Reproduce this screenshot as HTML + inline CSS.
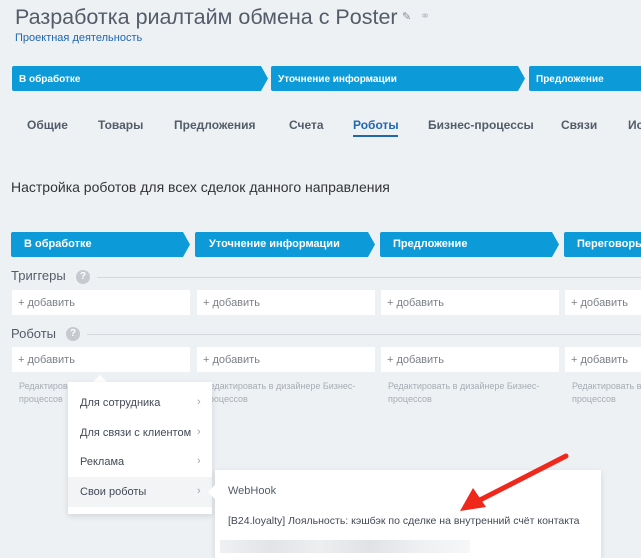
<!DOCTYPE html>
<html><head><meta charset="utf-8"><style>
*{margin:0;padding:0;box-sizing:border-box}
html,body{width:641px;height:558px;overflow:hidden}
body{background:#edf1f4;font-family:"Liberation Sans","Noto Sans CJK SC",sans-serif;position:relative;color:#535c69}
.a{position:absolute;white-space:nowrap}
.st{position:absolute;background:#0d9ad8;color:#fff;font-weight:bold;border-radius:2px;white-space:nowrap;overflow:hidden}
.chev{clip-path:polygon(0 0,calc(100% - 7px) 0,100% 50%,calc(100% - 7px) 100%,0 100%)}
.cell{position:absolute;background:#fff;height:25px;font-size:11px;color:#7b8088;padding:7px 0 0 6px;white-space:nowrap;overflow:hidden}
.tab{position:absolute;top:118px;font-size:12px;font-weight:bold;color:#535c69;white-space:nowrap}
.q{position:absolute;width:14px;height:14px;border-radius:50%;background:#c6cacf;color:#fff;font-size:10px;font-weight:bold;text-align:center;line-height:14px}
.ln{position:absolute;height:1px;background:#d5d9de}
.ed{position:absolute;font-size:9px;color:#a8adb4;line-height:13px;white-space:nowrap;overflow:hidden}
.mi{position:absolute;left:80px;font-size:11px;color:#424956;white-space:nowrap}
.ch{position:absolute;left:197px;font-size:11px;color:#a0a5ac}
</style></head><body>
<div class="a" style="left:15px;top:5px;font-size:21.5px;color:#535c69">Разработка риалтайм обмена с Poster</div>
<div class="a" style="left:402px;top:10px;font-size:11px;color:#8a9098">✎</div>
<div class="a" style="left:420px;top:9px;font-size:12px;color:#bcc1c7">⚭</div>
<div class="a" style="left:15px;top:32px;font-size:11px;color:#2067b0">Проектная деятельность</div>

<div class="st chev" style="left:12px;top:66px;width:256px;height:25px;font-size:10px;padding:8px 0 0 7px">В обработке</div>
<div class="st chev" style="left:271px;top:66px;width:254px;height:25px;font-size:10px;padding:8px 0 0 7px">Уточнение информации</div>
<div class="st" style="left:529px;top:66px;width:112px;height:25px;font-size:10px;padding:8px 0 0 7px;border-radius:2px 0 0 2px">Предложение</div>

<div class="tab" style="left:27px">Общие</div>
<div class="tab" style="left:98px">Товары</div>
<div class="tab" style="left:174px">Предложения</div>
<div class="tab" style="left:289px">Счета</div>
<div class="tab" style="left:353px;color:#2067b0">Роботы</div>
<div class="a" style="left:353px;top:135px;width:45px;height:2px;background:#2067b0"></div>
<div class="tab" style="left:428px">Бизнес-процессы</div>
<div class="tab" style="left:561px">Связи</div>
<div class="tab" style="left:628px;width:13px;overflow:hidden">Ис</div>

<div class="a" style="left:11px;top:179px;font-size:14px;color:#333">Настройка роботов для всех сделок данного направления</div>

<div class="st chev" style="left:11px;top:232px;width:179px;height:25px;font-size:11px;padding:6px 0 0 13px">В обработке</div>
<div class="st chev" style="left:195px;top:232px;width:180px;height:25px;font-size:11px;padding:6px 0 0 14px">Уточнение информации</div>
<div class="st chev" style="left:380px;top:232px;width:179px;height:25px;font-size:11px;padding:6px 0 0 13px">Предложение</div>
<div class="st" style="left:564px;top:232px;width:77px;height:25px;font-size:11px;padding:6px 0 0 13px;border-radius:2px 0 0 2px">Переговоры</div>

<div class="a" style="left:11px;top:268px;font-size:13px;color:#535c69">Триггеры</div>
<div class="q" style="left:76px;top:270px">?</div>
<div class="ln" style="left:97px;top:277px;width:544px"></div>
<div class="cell" style="left:12px;top:290px;width:178px">+ добавить</div>
<div class="cell" style="left:197px;top:290px;width:178px">+ добавить</div>
<div class="cell" style="left:381px;top:290px;width:178px">+ добавить</div>
<div class="cell" style="left:565px;top:290px;width:76px">+ добавить</div>

<div class="a" style="left:11px;top:326px;font-size:13px;color:#535c69">Роботы</div>
<div class="q" style="left:66px;top:327px">?</div>
<div class="ln" style="left:87px;top:334px;width:554px"></div>
<div class="cell" style="left:12px;top:347px;width:178px">+ добавить</div>
<div class="cell" style="left:197px;top:347px;width:178px">+ добавить</div>
<div class="cell" style="left:381px;top:347px;width:178px">+ добавить</div>
<div class="cell" style="left:565px;top:347px;width:76px">+ добавить</div>

<div class="ed" style="left:19px;top:380px;width:170px">Редактировать в дизайнере Бизнес-<br>процессов</div>
<div class="ed" style="left:204px;top:380px;width:170px">Редактировать в дизайнере Бизнес-<br>процессов</div>
<div class="ed" style="left:388px;top:380px;width:170px">Редактировать в дизайнере Бизнес-<br>процессов</div>
<div class="ed" style="left:572px;top:380px;width:69px">Редактировать в дизайнере Бизнес-<br>процессов</div>

<div class="a" style="left:93px;top:375px;width:0;height:0;border-left:7px solid transparent;border-right:7px solid transparent;border-bottom:7px solid #fff"></div>
<div class="a" style="left:68px;top:382px;width:144px;height:132px;background:#fff;box-shadow:0 2px 6px rgba(0,0,0,.12)"></div>
<div class="a" style="left:68px;top:477px;width:144px;height:30px;background:#f2f4f6"></div>
<div class="mi" style="top:397px">Для сотрудника</div><div class="ch" style="top:396px">›</div>
<div class="mi" style="top:427px">Для связи с клиентом</div><div class="ch" style="top:426px">›</div>
<div class="mi" style="top:456px">Реклама</div><div class="ch" style="top:455px">›</div>
<div class="mi" style="top:486px">Свои роботы</div><div class="ch" style="top:485px">›</div>

<div class="a" style="left:215px;top:470px;width:386px;height:88px;background:#fff;box-shadow:0 2px 6px rgba(0,0,0,.12)"></div>
<div class="a" style="left:208px;top:485px;width:0;height:0;border-top:7px solid transparent;border-bottom:7px solid transparent;border-right:7px solid #fff"></div>
<div class="a" style="left:228px;top:485px;font-size:11px;color:#535c69">WebHook</div>
<div class="a" style="left:228px;top:515px;font-size:10.5px;color:#424956">[B24.loyalty] Лояльность: кэшбэк по сделке на внутренний счёт контакта</div>
<div class="a" style="left:220px;top:540px;width:250px;height:13px;background:linear-gradient(90deg,#eef0f2,#e2e4e7,#eceef0,#e0e2e5,#eef0f2,#f6f7f8)"></div>

<svg class="a" style="left:0;top:0" width="641" height="558">
<line x1="566" y1="456" x2="478" y2="501" stroke="#f0271b" stroke-width="5" stroke-linecap="round"/>
<polygon points="460,511 473,488 486,507" fill="#f0271b"/>
</svg>
</body></html>
